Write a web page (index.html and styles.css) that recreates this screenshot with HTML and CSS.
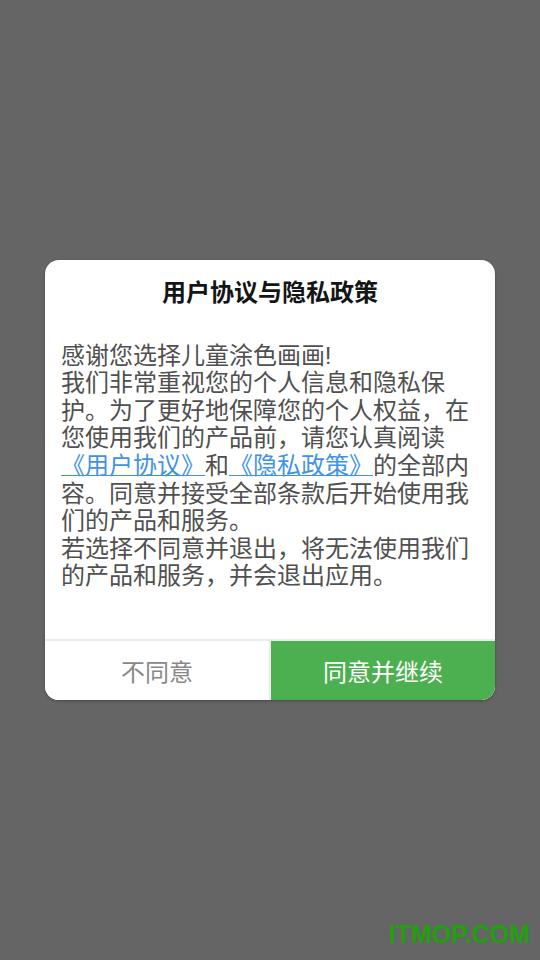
FILE: index.html
```html
<!DOCTYPE html>
<html lang="zh-CN">
<head>
    <meta charset="UTF-8">
    <meta name="viewport" content="width=device-width, initial-scale=1.0">
    <title>用户协议与隐私政策</title>
    <link rel="stylesheet" href="styles.css">
</head>
<body>

    <div class="dialog">
        <h2 class="dialog-title">用户协议与隐私政策</h2>
        <p class="dialog-text">感谢您选择儿童涂色画画!<br>我们非常重视您的个人信息和隐私保护。为了更好地保障您的个人权益，在您使用我们的产品前，请您认真阅读<a class="link" href="#">《用户协议》</a>和<a class="link" href="#">《隐私政策》</a>的全部内容。同意并接受全部条款后开始使用我们的产品和服务。<br>若选择不同意并退出，将无法使用我们的产品和服务，并会退出应用。</p>
        <div class="dialog-buttons">
            <button class="btn-refuse">不同意</button>
            <button class="btn-agree">同意并继续</button>
        </div>
    </div>

    <div class="watermark">ITMOP.COM</div>

</body>
</html>
```

FILE: styles.css
```css
:root {
    --bg-color: #656565;
    --text-color: #505050;
    --title-color: #151515;
    --link-color: #3f93e6;
    --agree-color: #4caf50;
    --divider-color: #ebebeb;
}
html, body {
    margin: 0;
    height: 100%;
}
body {
    font-family: Roboto, "Noto Sans CJK SC", sans-serif;
    background-color: var(--bg-color);
    display: flex;
    justify-content: center;
    align-items: center;
    text-spacing-trim: space-all;
}
.dialog {
    width: 450px;
    background: white;
    border-radius: 14px;
    overflow: hidden;
    box-shadow: 0 1px 3px rgba(0, 0, 0, 0.3);
}
.dialog-title {
    margin: 0;
    padding: 19px 16px 0;
    font-size: 24px;
    line-height: 28px;
    font-weight: 700;
    text-align: center;
    color: var(--title-color);
}
.dialog-text {
    margin: 36px 0 0;
    padding: 0 16px 48.6px;
    font-size: 24px;
    line-height: 27.6px;
    color: var(--text-color);
}
.link {
    color: var(--link-color);
    text-decoration: underline;
    text-decoration-thickness: 1px;
}
.dialog-buttons {
    display: grid;
    grid-template-columns: 1fr 1fr;
    gap: 2px;
    border-top: 2px solid var(--divider-color);
    background: var(--divider-color);
}
.dialog-buttons button {
    height: 59px;
    border: none;
    font-family: inherit;
    font-size: 24px;
    cursor: pointer;
}
.btn-refuse { background: white; color: #888; }
.btn-agree { background: var(--agree-color); color: white; }
.watermark {
    position: absolute;
    right: 10px;
    bottom: 11px;
    font-family: "Liberation Sans", Arial, sans-serif;
    font-weight: 700;
    font-size: 25px;
    color: #22a00e;
}
```
